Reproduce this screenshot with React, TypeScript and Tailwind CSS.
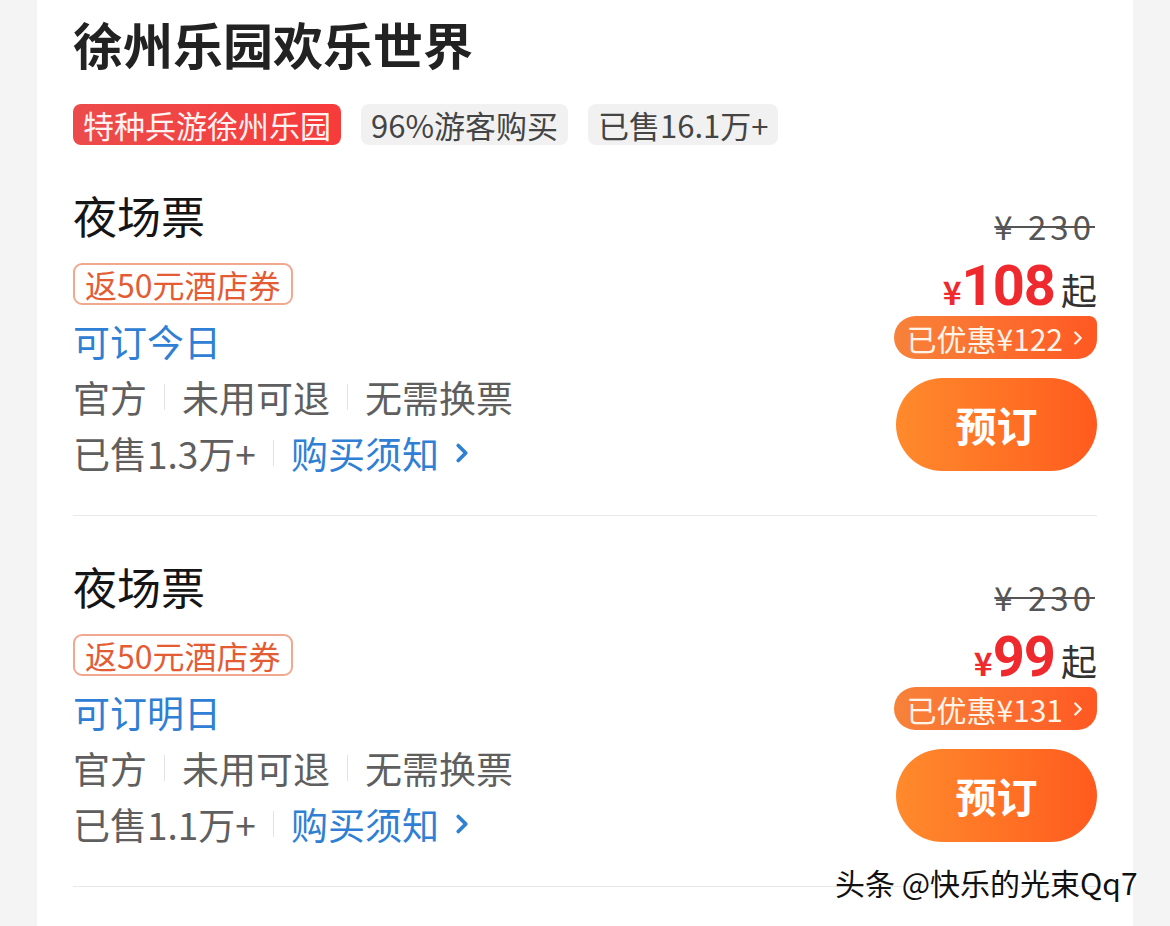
import { ChevronRight } from 'lucide-react'

interface Ticket {
  name: string
  bookable: string
  sold: string
  price: string
  discount: string
}

const tickets: Ticket[] = [
  { name: '夜场票', bookable: '可订今日', sold: '已售1.3万+', price: '108', discount: '已优惠¥122' },
  { name: '夜场票', bookable: '可订明日', sold: '已售1.1万+', price: '99', discount: '已优惠¥131' },
]

function Bar() {
  return <span className="mx-[17px] h-[26px] w-px bg-[#e2e2e2]" />
}

function TicketRow({ ticket }: { ticket: Ticket }) {
  return (
    <div className="flex justify-between border-b border-[#e8e8e8] pt-[48px] pb-[34px]">
      {/* Left */}
      <div className="flex flex-col items-start">
        <h2 className="text-[44px] leading-none text-[#151515]">{ticket.name}</h2>
        <span className="mt-[26px] flex h-[42px] items-center rounded-[9px] border-2 border-[#f0a88e] px-[10px] text-[32px] leading-none text-[#e45c34]">
          返50元酒店券
        </span>
        <span className="mt-[8px] text-[37px] leading-[56px] text-[#2f80d4]">{ticket.bookable}</span>
        <div className="flex items-center text-[37px] leading-[56px] text-[#5f5f5f]">
          <span>官方</span>
          <Bar />
          <span>未用可退</span>
          <Bar />
          <span>无需换票</span>
        </div>
        <div className="flex items-center text-[37px] leading-[56px] text-[#5f5f5f]">
          <span>{ticket.sold}</span>
          <Bar />
          <span className="text-[#2f80d4]">购买须知</span>
          <ChevronRight className="ml-[8px] h-[30px] w-[30px] text-[#2f80d4]" strokeWidth={3} />
        </div>
      </div>

      {/* Right */}
      <div className="mt-[13px] flex flex-col items-end">
        <span className="mr-[2px] text-[33px] leading-[40px] tracking-[4px] text-[#555] line-through decoration-[2px]">
          ¥ 230
        </span>
        <div className="mt-[12px] flex h-[56px] items-baseline">
          <span className="text-[32px] font-bold text-[#ef2a2e]">¥</span>
          <span className="font-['Roboto'] text-[56px] font-bold leading-[56px] tracking-[-1px] text-[#ef2a2e]">
            {ticket.price}
          </span>
          <span className="ml-[6px] text-[36px] text-[#333]">起</span>
        </div>
        <span className="mt-[2px] flex h-[43px] items-center rounded-l-[22px] rounded-tr-[8px] rounded-br-[20px] bg-linear-to-r from-[#f7823a] to-[#ff5822] pr-[8px] pl-[12px] text-[30px] leading-none text-[#fff4ea]">
          {ticket.discount}
          <ChevronRight className="ml-[4px] h-[22px] w-[22px]" strokeWidth={2.5} />
        </span>
        <button className="mt-[19px] flex h-[93px] w-[201px] items-center justify-center rounded-full bg-linear-to-r from-[#ff8a2c] to-[#ff5a1e] text-[41px] font-bold text-white">
          预订
        </button>
      </div>
    </div>
  )
}

export default function App() {
  return (
    <div className="relative h-[926px] overflow-hidden bg-[#f4f4f4] font-['Noto_Sans_CJK_SC',sans-serif]">
      <div className="ml-[37px] min-h-full w-[1096px] bg-white px-[36px] pt-[18px]">
        {/* Header */}
        <h1 className="text-[50px] leading-none font-bold text-[#222]">徐州乐园欢乐世界</h1>
        <div className="mt-[36px] flex gap-[20px]">
          <span className="flex h-[41px] items-center rounded-[8px] bg-linear-to-r from-[#ec4b4b] to-[#f83a3a] px-[10px] text-[31px] leading-none text-[#fff2f2]">
            特种兵游徐州乐园
          </span>
          <span className="flex h-[41px] items-center rounded-[8px] bg-[#f1f1f1] px-[10px] text-[31px] leading-none text-[#444]">
            96%游客购买
          </span>
          <span className="flex h-[41px] items-center rounded-[8px] bg-[#f1f1f1] px-[10px] text-[31px] leading-none text-[#444]">
            已售16.1万+
          </span>
        </div>

        {/* Tickets */}
        {tickets.map((ticket, i) => (
          <TicketRow key={i} ticket={ticket} />
        ))}
      </div>

      {/* Watermark */}
      <span className="absolute top-[867px] left-[835px] text-[30px] leading-none text-[#111] [text-shadow:1px_1px_0_#fff,-1px_-1px_0_#fff,2px_0_1px_#fff]">
        头条 @快乐的光束Qq7
      </span>
    </div>
  )
}
